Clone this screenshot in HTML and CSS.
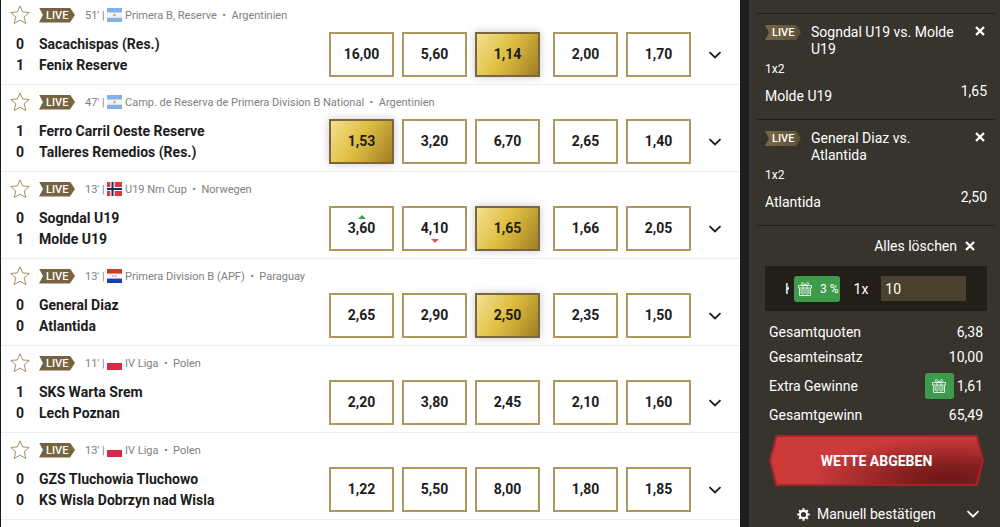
FILE: index.html
```html
<!DOCTYPE html>
<html lang="de">
<head>
  <meta charset="utf-8">
  <meta name="viewport" content="width=device-width, initial-scale=1">
  <title>Live Wetten</title>
  <link rel="stylesheet" href="styles.css">
</head>
<body>
  <!-- Shared icons and flags -->
  <svg class="sprite" aria-hidden="true">
    <symbol id="star" viewBox="0 0 20 20">
      <path d="M10 .9l2.600 6 6.600.6-5 4.300 1.600 6.700L10 15.100l-5.800 3.400 1.600-6.700-5-4.300 6.600-.6z" fill="none" stroke="#9a8252" stroke-width=".9" stroke-linejoin="round"/>
    </symbol>
    <symbol id="chevron" viewBox="0 0 14 8">
      <path d="M1.500 1.200L7 6.500l5.500-5.300" fill="none" stroke="currentColor" stroke-width="1.800"/>
    </symbol>
    <symbol id="close" viewBox="0 0 10 10">
      <path d="M1 1l8 8M9 1L1 9" fill="none" stroke="currentColor" stroke-width="2.300"/>
    </symbol>
    <symbol id="gift" viewBox="0 0 14 14">
      <path d="M.5 3.500h13v2.500H.5zM1.500 6v7.500h11V6M5 3.500v10M9 3.500v10M3.200 7v5M7 7v5M10.800 7v5M7 3.200C5.500.2 3.300.1 3.300 1.700c0 1 1.300 1.500 3.700 1.500C9.400 3.200 10.700 2.700 10.700 1.700 10.700.1 8.500.2 7 3.200" fill="none" stroke="#fff" stroke-width=".8"/>
    </symbol>
    <symbol id="flag-ar" viewBox="0 0 15 14">
      <path d="M0 0h15v14H0z" fill="#f4f4f4"/>
      <path d="M0 0h15v4.600H0zM0 9.800h15V14H0z" fill="#83b0e6"/>
      <circle cx="7.500" cy="7.100" r="1.300" fill="#dfa94e"/>
    </symbol>
    <symbol id="flag-no" viewBox="0 0 15 14">
      <path d="M0 0h15v14H0z" fill="#e03540"/>
      <path d="M3.300 0h4.400v14H3.300zM0 4.900h15v4.200H0z" fill="#fff"/>
      <path d="M4.500 0h2v14h-2zM0 6h15v2H0z" fill="#1c2b66"/>
    </symbol>
    <symbol id="flag-py" viewBox="0 0 15 14">
      <path d="M0 0h15v14H0z" fill="#f7f7f7"/>
      <path d="M0 0h15v4.600H0z" fill="#cf3b2b"/>
      <path d="M0 9.600h15V14H0z" fill="#1a3fae"/>
      <path d="M6 6v2M8.800 6v2" stroke="#98966a" stroke-width="1"/>
    </symbol>
    <symbol id="flag-pl" viewBox="0 0 15 14">
      <path d="M0 0h15v14H0z" fill="#fff"/>
      <path d="M0 7h15v7H0z" fill="#d42a46"/>
    </symbol>
  </svg>

  <div class="page">
    <main class="matches">
      <article class="match">
        <div class="match-head">
          <button class="fav" aria-label="Favorit"><svg><use href="#star"/></svg></button>
          <span class="live">LIVE</span>
          <span class="minute">51' |</span>
          <svg class="flag"><use href="#flag-ar"/></svg>
          <span>Primera B, Reserve &nbsp;•&nbsp; Argentinien</span>
        </div>
        <div class="match-body">
          <div class="score"><span>0</span><span>1</span></div>
          <div class="teams"><span>Sacachispas (Res.)</span><span>Fenix Reserve</span></div>
          <div class="odds"><button class="odd">16,00</button><button class="odd">5,60</button><button class="odd selected">1,14</button></div>
          <div class="odds"><button class="odd">2,00</button><button class="odd">1,70</button></div>
          <button class="more" aria-label="Mehr Wetten"><svg><use href="#chevron"/></svg></button>
        </div>
      </article>

      <article class="match">
        <div class="match-head">
          <button class="fav" aria-label="Favorit"><svg><use href="#star"/></svg></button>
          <span class="live">LIVE</span>
          <span class="minute">47' |</span>
          <svg class="flag"><use href="#flag-ar"/></svg>
          <span>Camp. de Reserva de Primera Division B National &nbsp;•&nbsp; Argentinien</span>
        </div>
        <div class="match-body">
          <div class="score"><span>1</span><span>0</span></div>
          <div class="teams"><span>Ferro Carril Oeste Reserve</span><span>Talleres Remedios (Res.)</span></div>
          <div class="odds"><button class="odd selected">1,53</button><button class="odd">3,20</button><button class="odd">6,70</button></div>
          <div class="odds"><button class="odd">2,65</button><button class="odd">1,40</button></div>
          <button class="more" aria-label="Mehr Wetten"><svg><use href="#chevron"/></svg></button>
        </div>
      </article>

      <article class="match">
        <div class="match-head">
          <button class="fav" aria-label="Favorit"><svg><use href="#star"/></svg></button>
          <span class="live">LIVE</span>
          <span class="minute">13' |</span>
          <svg class="flag"><use href="#flag-no"/></svg>
          <span>U19 Nm Cup &nbsp;•&nbsp; Norwegen</span>
        </div>
        <div class="match-body">
          <div class="score"><span>0</span><span>1</span></div>
          <div class="teams"><span>Sogndal U19</span><span>Molde U19</span></div>
          <div class="odds"><button class="odd up">3,60</button><button class="odd down">4,10</button><button class="odd selected">1,65</button></div>
          <div class="odds"><button class="odd">1,66</button><button class="odd">2,05</button></div>
          <button class="more" aria-label="Mehr Wetten"><svg><use href="#chevron"/></svg></button>
        </div>
      </article>

      <article class="match">
        <div class="match-head">
          <button class="fav" aria-label="Favorit"><svg><use href="#star"/></svg></button>
          <span class="live">LIVE</span>
          <span class="minute">13' |</span>
          <svg class="flag"><use href="#flag-py"/></svg>
          <span>Primera Division B (APF) &nbsp;•&nbsp; Paraguay</span>
        </div>
        <div class="match-body">
          <div class="score"><span>0</span><span>0</span></div>
          <div class="teams"><span>General Diaz</span><span>Atlantida</span></div>
          <div class="odds"><button class="odd">2,65</button><button class="odd">2,90</button><button class="odd selected">2,50</button></div>
          <div class="odds"><button class="odd">2,35</button><button class="odd">1,50</button></div>
          <button class="more" aria-label="Mehr Wetten"><svg><use href="#chevron"/></svg></button>
        </div>
      </article>

      <article class="match">
        <div class="match-head">
          <button class="fav" aria-label="Favorit"><svg><use href="#star"/></svg></button>
          <span class="live">LIVE</span>
          <span class="minute">11' |</span>
          <svg class="flag"><use href="#flag-pl"/></svg>
          <span>IV Liga &nbsp;•&nbsp; Polen</span>
        </div>
        <div class="match-body">
          <div class="score"><span>1</span><span>0</span></div>
          <div class="teams"><span>SKS Warta Srem</span><span>Lech Poznan</span></div>
          <div class="odds"><button class="odd">2,20</button><button class="odd">3,80</button><button class="odd">2,45</button></div>
          <div class="odds"><button class="odd">2,10</button><button class="odd">1,60</button></div>
          <button class="more" aria-label="Mehr Wetten"><svg><use href="#chevron"/></svg></button>
        </div>
      </article>

      <article class="match">
        <div class="match-head">
          <button class="fav" aria-label="Favorit"><svg><use href="#star"/></svg></button>
          <span class="live">LIVE</span>
          <span class="minute">13' |</span>
          <svg class="flag"><use href="#flag-pl"/></svg>
          <span>IV Liga &nbsp;•&nbsp; Polen</span>
        </div>
        <div class="match-body">
          <div class="score"><span>0</span><span>0</span></div>
          <div class="teams"><span>GZS Tluchowia Tluchowo</span><span>KS Wisla Dobrzyn nad Wisla</span></div>
          <div class="odds"><button class="odd">1,22</button><button class="odd">5,50</button><button class="odd">8,00</button></div>
          <div class="odds"><button class="odd">1,80</button><button class="odd">1,85</button></div>
          <button class="more" aria-label="Mehr Wetten"><svg><use href="#chevron"/></svg></button>
        </div>
      </article>
    </main>

    <aside class="betslip">
      <div class="bet">
        <div class="bet-head">
          <span class="live">LIVE</span>
          <span class="bet-title">Sogndal U19 vs. Molde U19</span>
          <button class="remove" aria-label="Entfernen"><svg><use href="#close"/></svg></button>
        </div>
        <div class="market">1x2</div>
        <div class="pick"><span>Molde U19</span><span class="pick-odd">1,65</span></div>
      </div>
      <div class="bet">
        <div class="bet-head">
          <span class="live">LIVE</span>
          <span class="bet-title">General Diaz vs. Atlantida</span>
          <button class="remove" aria-label="Entfernen"><svg><use href="#close"/></svg></button>
        </div>
        <div class="market">1x2</div>
        <div class="pick"><span>Atlantida</span><span class="pick-odd">2,50</span></div>
      </div>

      <div class="slip-footer">
        <button class="clear">Alles löschen <svg><use href="#close"/></svg></button>

        <div class="stake">
          <span class="stake-type">K</span>
          <span class="bonus"><svg><use href="#gift"/></svg>3 %</span>
          <label for="stake">1x</label>
          <input type="text" id="stake" value="10">
        </div>

        <dl class="totals">
          <div class="total"><dt>Gesamtquoten</dt><dd>6,38</dd></div>
          <div class="total"><dt>Gesamteinsatz</dt><dd>10,00</dd></div>
          <div class="total extra"><dt>Extra Gewinne</dt><dd><span class="bonus"><svg><use href="#gift"/></svg></span>1,61</dd></div>
          <div class="total"><dt>Gesamtgewinn</dt><dd>65,49</dd></div>
        </dl>

        <button class="place-bet"><span>WETTE ABGEBEN</span></button>

        <button class="settings">
          <svg class="gear" viewBox="0 0 14 14">
            <circle cx="7" cy="7" r="3.900" fill="none" stroke="currentColor" stroke-width="2.200"/>
            <path d="M7 .3v2.200M7 11.500v2.200M.3 7h2.200M11.500 7h2.200M2.300 2.300l1.500 1.500M10.200 10.200l1.500 1.500M2.300 11.700l1.500-1.500M10.200 3.800l1.500-1.500" stroke="currentColor" stroke-width="2.300"/>
          </svg>
          <span>Manuell bestätigen</span>
          <svg class="arrow"><use href="#chevron"/></svg>
        </button>
      </div>
    </aside>
  </div>
</body>
</html>
```
FILE: styles.css
```css
* {
  box-sizing: border-box;
}

body {
  margin: 0;
  font-family: Roboto, "Liberation Sans", sans-serif;
  font-size: 14px;
  color: #1c1c1c;
  background: #fff;
}

button {
  font: inherit;
  color: inherit;
  background: none;
  border: none;
  padding: 0;
  cursor: pointer;
}

svg {
  display: block;
  flex: none;
}

.sprite {
  position: absolute;
  width: 0;
  height: 0;
}

.page {
  display: flex;
  height: 100vh;
  overflow: hidden;
}

/* Match list */
.matches {
  flex: 1;
  min-width: 0;
  border-left: 1px solid #1c1c1c;
}

.match {
  padding: 7px 18px 7px 9px;
  border-bottom: 1px solid #efedea;
}

.match:first-child {
  padding-top: 5px;
}

.match-head {
  display: flex;
  align-items: center;
  height: 20px;
  margin-bottom: 7px;
  font-size: 11px;
  color: #808080;
  white-space: nowrap;
}

.fav {
  margin-right: 9px;
}

.fav svg {
  width: 20px;
  height: 20px;
}

.live {
  flex: none;
  width: 36px;
  height: 15px;
  padding-left: 7px;
  font-size: 11px;
  line-height: 15px;
  font-weight: 500;
  color: #fff;
  background: #776341;
  clip-path: polygon(0 0, 86% 0, 100% 50%, 86% 100%, 0 100%, 11% 50%);
}

.minute {
  width: 20px;
  margin-left: 10px;
}

.flag {
  width: 15px;
  height: 14px;
  margin: 0 3px 0 2px;
}

.match-body {
  display: flex;
  align-items: center;
  font-weight: bold;
  line-height: 21px;
}

.score,
.teams {
  display: flex;
  flex-direction: column;
}

.score {
  width: 20px;
  margin-right: 9px;
  text-align: center;
}

.teams {
  flex: 1;
  min-width: 0;
}

.odds {
  display: flex;
  gap: 8px;
  margin-right: 13px;
}

.odd {
  position: relative;
  width: 65px;
  height: 45px;
  border: 2px solid #ae9860;
  font-weight: bold;
}

.odd.selected {
  border-color: #7a6740;
  background: linear-gradient(120deg, #f3df91 0%, #dfc043 45%, #ccaa38 65%, #a07b24 100%);
  box-shadow: 0 0 8px rgba(40, 40, 70, 0.25);
}

.odd.up::before,
.odd.down::after {
  content: "";
  position: absolute;
  left: 50%;
  margin-left: -4px;
  border: 4px solid transparent;
}

.odd.up::before {
  top: 7px;
  border-top: none;
  border-bottom-color: #45a354;
}

.odd.down::after {
  bottom: 6px;
  border-bottom: none;
  border-top-color: #e0575f;
}

.more {
  margin-left: 4px;
}

.more svg,
.arrow {
  width: 14px;
  height: 8px;
}

/* Bet slip */
.betslip {
  flex: none;
  width: 260px;
  padding: 13px 5px 0 8px;
  border-left: 9px solid #1e1e20;
  color: #fff;
  background: #37332d;
}

.bet {
  height: 106px;
  padding: 10px 8px 0;
  border-top: 1px solid #211e1a;
}

.bet-head {
  display: flex;
  align-items: flex-start;
  line-height: 17px;
}

.bet .live {
  margin: 1px 10px 0 0;
  background: linear-gradient(90deg, #7a6745, #5d5038);
}

.bet-title {
  flex: 1;
  padding-right: 8px;
}

.remove {
  padding: 2px;
}

.remove svg,
.clear svg {
  width: 10px;
  height: 10px;
}

.market {
  margin-top: 3px;
  font-size: 12px;
  line-height: 16px;
}

.pick {
  display: flex;
  justify-content: space-between;
  align-items: flex-end;
  height: 27px;
  line-height: 16px;
}

.pick-odd {
  align-self: center;
}

.slip-footer {
  display: flex;
  flex-direction: column;
  padding: 0 8px;
  border-top: 1px solid #211e1a;
}

.clear {
  display: flex;
  align-items: center;
  align-self: flex-end;
  gap: 8px;
  height: 40px;
  margin-right: 12px;
}

.stake {
  display: flex;
  align-items: center;
  height: 45px;
  padding: 0 21px 0 20px;
  background: #231e18;
}

.stake-type {
  width: 4px;
  margin-right: 5px;
  overflow: hidden;
}

.bonus {
  display: flex;
  align-items: center;
  justify-content: center;
  gap: 8px;
  height: 26px;
  padding: 0 1px 0 4px;
  border-radius: 3px;
  font-size: 12px;
  white-space: nowrap;
  background: #3d9b4b;
}

.bonus svg {
  width: 14px;
  height: 14px;
}

.stake label {
  margin: 0 13px 0 14px;
}

.stake input {
  flex: 1;
  min-width: 0;
  height: 25px;
  padding: 0 4px;
  border: none;
  font: inherit;
  color: #fff;
  background: #4a4131;
}

.totals {
  margin: 8px 4px;
}

.total {
  display: flex;
  align-items: center;
  justify-content: space-between;
  height: 25px;
}

.total.extra {
  height: 33px;
}

.total dd {
  display: flex;
  align-items: center;
  gap: 3px;
  margin: 0;
}

.total .bonus {
  width: 29px;
  padding: 0;
}

.place-bet {
  height: 51px;
  margin: 0 3px 0 4px;
  padding: 2px;
  font-weight: bold;
  background: #a42427;
  clip-path: polygon(3% 0, 97% 0, 100% 50%, 97% 100%, 3% 100%, 0 50%);
}

.place-bet span {
  display: flex;
  align-items: center;
  justify-content: center;
  height: 100%;
  background: radial-gradient(ellipse 65% 90% at 85% 90%, #6f1519 0%, #85201f 35%, #cd3a3a 100%);
  clip-path: polygon(3% 0, 97% 0, 100% 50%, 97% 100%, 3% 100%, 0 50%);
}

.settings {
  display: flex;
  align-items: center;
  gap: 7px;
  height: 24px;
  margin-top: 16px;
  padding: 0 7px 0 32px;
}

.gear {
  width: 13px;
  height: 13px;
}

.arrow {
  margin-left: auto;
}
```
